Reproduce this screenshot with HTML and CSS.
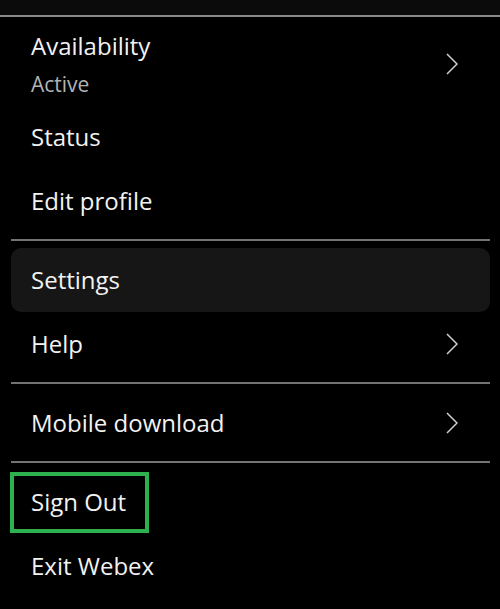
FILE: index.html
```html
<!DOCTYPE html>
<html>
<head>
<meta charset="utf-8">
<link rel="stylesheet" href="styles.css">
</head>
<body>
<div class="topbar"></div>
<div class="menu">
  <div class="item item-tall">
    <div class="label">
      <div class="title">Availability</div>
      <div class="sub">Active</div>
    </div>
    <svg class="chev" viewBox="0 0 12 22"><path d="M1 1 L11 11 L1 21" /></svg>
  </div>
  <div class="item"><div class="title">Status</div></div>
  <div class="item"><div class="title">Edit profile</div></div>
  <div class="sep"></div>
  <div class="item active"><div class="title">Settings</div></div>
  <div class="item">
    <div class="title">Help</div>
    <svg class="chev" viewBox="0 0 12 22"><path d="M1 1 L11 11 L1 21" /></svg>
  </div>
  <div class="sep"></div>
  <div class="item">
    <div class="title">Mobile download</div>
    <svg class="chev" viewBox="0 0 12 22"><path d="M1 1 L11 11 L1 21" /></svg>
  </div>
  <div class="sep"></div>
  <div class="item">
    <div class="title signout">Sign Out</div>
  </div>
  <div class="item"><div class="title">Exit Webex</div></div>
</div>
</body>
</html>
```
FILE: styles.css
```css
html, body {
  margin: 0;
  padding: 0;
  background: #000;
}
body {
  width: 500px;
  height: 609px;
  overflow: hidden;
  font-family: "Open Sans", "Noto Sans", sans-serif;
  color: #f2f2f2;
}
.topbar {
  height: 15px;
  background: #0b0b0b;
  border-bottom: 2px solid #8a8a8a;
}
.menu {
  display: flex;
  flex-direction: column;
  padding: 0 10px 0 11px;
}
.item {
  height: 64px;
  display: flex;
  align-items: center;
  justify-content: space-between;
  padding: 0 32px 0 20px;
  border-radius: 10px;
}
.item-tall {
  height: 88px;
  align-items: flex-start;
  padding-top: 13px;
  box-sizing: border-box;
}
.item-tall .chev {
  margin-top: 23px;
}
.title {
  font-size: 24px;
  line-height: 32px;
}
.sub {
  font-size: 21px;
  line-height: 28px;
  color: #b3b3b3;
  margin-top: 8px;
}
.active {
  background: #161616;
}
.sep {
  height: 2px;
  background: #737373;
  margin: 6px 0 7px;
}
.chev {
  width: 12px;
  height: 22px;
  fill: none;
  stroke: #cfcfcf;
  stroke-width: 1.5;
}
.signout {
  border: 4px solid #2db14e;
  margin-left: -21px;
  padding: 10px 19px 11px 17px;
}
```
